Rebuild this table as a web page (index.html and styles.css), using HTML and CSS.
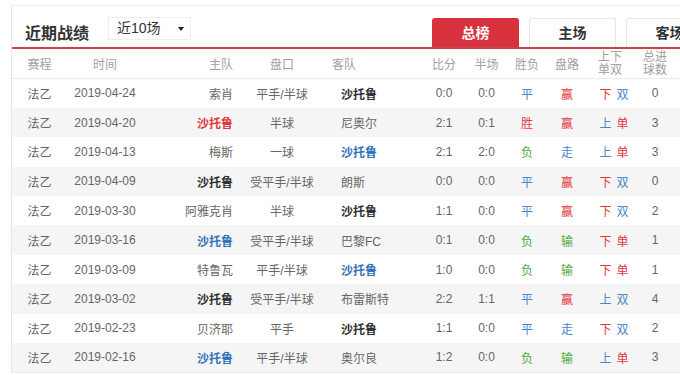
FILE: index.html
```html
<!DOCTYPE html>
<html lang="zh-CN">
  <head>
    <meta charset="UTF-8" />
    <meta name="viewport" content="width=device-width, initial-scale=1.0" />
    <title>近期战绩</title>
    <link rel="stylesheet" href="styles.css">
  </head>
  <body>
    <div class="panel">
      <div class="panel-head">
        <h2 class="title">近期战绩</h2>
        <div class="select">近10场<span class="caret"></span></div>
        <div class="tabs">
          <a class="tab active">总榜</a>
          <a class="tab">主场</a>
          <a class="tab">客场</a>
        </div>
      </div>
      <table class="record">
        <colgroup>
          <col class="w-match" /><col class="w-date" /><col class="w-home" /><col class="w-pan" />
          <col class="w-away" /><col class="w-score" /><col class="w-half" /><col class="w-res" />
          <col class="w-road" /><col class="w-ou" /><col class="w-goals" /><col />
        </colgroup>
        <thead>
          <tr>
            <th>赛程</th>
            <th>时间</th>
            <th class="home">主队</th>
            <th>盘口</th>
            <th class="away">客队</th>
            <th>比分</th>
            <th>半场</th>
            <th>胜负</th>
            <th>盘路</th>
            <th class="two ou">上下<br />单双</th>
            <th class="two">总进<br />球数</th>
            <th></th>
          </tr>
        </thead>
        <tbody>
          <tr>
            <td>法乙</td><td>2019-04-24</td><td class="home">索肖</td><td>平手/半球</td>
            <td class="away team">沙托鲁</td><td>0:0</td><td>0:0</td>
            <td class="blue">平</td><td class="red">赢</td>
            <td class="pair"><span class="red">下</span><span class="blue">双</span></td><td>0</td><td></td>
          </tr>
          <tr>
            <td>法乙</td><td>2019-04-20</td><td class="home team red">沙托鲁</td><td>半球</td>
            <td class="away">尼奥尔</td><td>2:1</td><td>0:1</td>
            <td class="red">胜</td><td class="red">赢</td>
            <td class="pair"><span class="blue">上</span><span class="red">单</span></td><td>3</td><td></td>
          </tr>
          <tr>
            <td>法乙</td><td>2019-04-13</td><td class="home">梅斯</td><td>一球</td>
            <td class="away team blue">沙托鲁</td><td>2:1</td><td>2:0</td>
            <td class="green">负</td><td class="blue">走</td>
            <td class="pair"><span class="blue">上</span><span class="red">单</span></td><td>3</td><td></td>
          </tr>
          <tr>
            <td>法乙</td><td>2019-04-09</td><td class="home team">沙托鲁</td><td>受平手/半球</td>
            <td class="away">朗斯</td><td>0:0</td><td>0:0</td>
            <td class="blue">平</td><td class="red">赢</td>
            <td class="pair"><span class="red">下</span><span class="blue">双</span></td><td>0</td><td></td>
          </tr>
          <tr>
            <td>法乙</td><td>2019-03-30</td><td class="home">阿雅克肖</td><td>半球</td>
            <td class="away team">沙托鲁</td><td>1:1</td><td>0:0</td>
            <td class="blue">平</td><td class="red">赢</td>
            <td class="pair"><span class="red">下</span><span class="blue">双</span></td><td>2</td><td></td>
          </tr>
          <tr>
            <td>法乙</td><td>2019-03-16</td><td class="home team blue">沙托鲁</td><td>受平手/半球</td>
            <td class="away">巴黎FC</td><td>0:1</td><td>0:0</td>
            <td class="green">负</td><td class="green">输</td>
            <td class="pair"><span class="red">下</span><span class="red">单</span></td><td>1</td><td></td>
          </tr>
          <tr>
            <td>法乙</td><td>2019-03-09</td><td class="home">特鲁瓦</td><td>平手/半球</td>
            <td class="away team blue">沙托鲁</td><td>1:0</td><td>0:0</td>
            <td class="green">负</td><td class="green">输</td>
            <td class="pair"><span class="red">下</span><span class="red">单</span></td><td>1</td><td></td>
          </tr>
          <tr>
            <td>法乙</td><td>2019-03-02</td><td class="home team">沙托鲁</td><td>受平手/半球</td>
            <td class="away">布雷斯特</td><td>2:2</td><td>1:1</td>
            <td class="blue">平</td><td class="red">赢</td>
            <td class="pair"><span class="blue">上</span><span class="blue">双</span></td><td>4</td><td></td>
          </tr>
          <tr>
            <td>法乙</td><td>2019-02-23</td><td class="home">贝济耶</td><td>平手</td>
            <td class="away team">沙托鲁</td><td>1:1</td><td>0:0</td>
            <td class="blue">平</td><td class="blue">走</td>
            <td class="pair"><span class="red">下</span><span class="blue">双</span></td><td>2</td><td></td>
          </tr>
          <tr>
            <td>法乙</td><td>2019-02-16</td><td class="home team blue">沙托鲁</td><td>平手/半球</td>
            <td class="away">奥尔良</td><td>1:2</td><td>0:0</td>
            <td class="green">负</td><td class="green">输</td>
            <td class="pair"><span class="blue">上</span><span class="red">单</span></td><td>3</td><td></td>
          </tr>
        </tbody>
      </table>
    </div>
  </body>
</html>
```

FILE: styles.css
```css
body {
  margin: 0;
  padding: 5px 0 0 11px;
  background-color: white;
  font-family: "Liberation Sans", "Noto Sans CJK SC", sans-serif;
  font-size: 12px;
  color: #666;
  overflow: hidden;
}
.panel {
  width: 760px;
  border-top: 1px solid #eee;
  border-left: 1px solid #e6e6e6;
}
.panel-head {
  display: flex;
  align-items: flex-start;
  height: 30px;
  padding-top: 11px;
  border-bottom: 2px solid #c9434c;
}
.title {
  margin: 7px 0 0 13px;
  font-size: 16px;
  line-height: 20px;
  font-weight: bold;
  color: #333;
}
.select {
  position: relative;
  box-sizing: border-box;
  width: 83px;
  height: 23px;
  margin-left: 19px;
  padding-left: 8px;
  border: 1px solid #eee;
  font-size: 14px;
  line-height: 21px;
  color: #333;
}
.caret {
  position: absolute;
  right: 6px;
  top: 9px;
  border-left: 3px solid transparent;
  border-right: 3px solid transparent;
  border-top: 4px solid #222;
}
.tabs {
  display: flex;
  gap: 10px;
  margin: 1px 0 0 241px;
}
.tab {
  box-sizing: border-box;
  width: 87px;
  height: 29px;
  border: 1px solid #e6e6e6;
  border-bottom: none;
  border-radius: 3px 3px 0 0;
  background-color: white;
  font-size: 14px;
  font-weight: bold;
  line-height: 28px;
  text-align: center;
  color: #333;
}
.tab.active {
  background-color: #d8323e;
  border-color: #d8323e;
  color: white;
}
.record {
  width: 760px;
  table-layout: fixed;
  border-collapse: collapse;
}
.w-match { width: 55px; }
.w-date { width: 76px; }
.w-home { width: 98px; }
.w-pan { width: 82px; }
.w-away { width: 98px; }
.w-score { width: 46px; }
.w-half { width: 39px; }
.w-res { width: 42px; }
.w-road { width: 38px; }
.w-ou { width: 56px; }
.w-goals { width: 26px; }
th,
td {
  padding: 0;
  text-align: center;
  white-space: nowrap;
}
th {
  height: 29px;
  font-weight: normal;
  color: #a0a0a0;
  border-bottom: 1px solid #ececec;
}
th.two {
  line-height: 13px;
}
th.ou {
  padding-right: 8px;
}
tbody tr {
  height: 29.4px;
}
tbody tr:nth-child(even) {
  background-color: #f5f5f5;
}
tbody tr:last-child {
  border-bottom: 1px solid #e8e8e8;
}
.pair span + span {
  margin-left: 5px;
}
.home {
  text-align: right;
  padding-right: 8px;
}
th.away {
  text-align: left;
  padding-left: 9px;
}
td.away {
  text-align: left;
  padding-left: 18px;
}
.team {
  font-weight: bold;
  color: #333;
}
.red {
  color: #e2393f;
}
.blue {
  color: #4a86c8;
}
.team.blue {
  color: #3574b8;
}
.green {
  color: #4fa83c;
}
```
